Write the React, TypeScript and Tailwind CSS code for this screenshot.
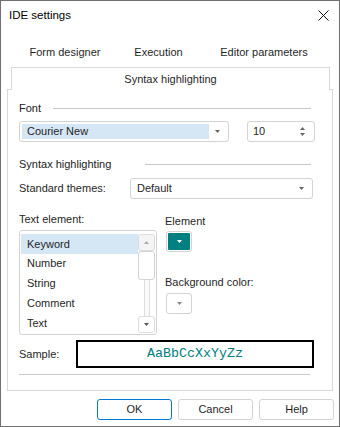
import { useState } from "react";

const font = { fontFamily: '"Liberation Sans", Arial, sans-serif' };

// tiny triangle used by combos / scroll buttons
const Tri = ({ up, color = "#666" }: { up?: boolean; color?: string }) => (
  <svg width="5" height="3" viewBox="0 0 5 3">
    <path d={up ? "M0 3h5L2.5 0z" : "M0 0h5L2.5 3z"} fill={color} />
  </svg>
);

const Section = ({ title, lineStart }: { title: string; lineStart: string }) => (
  <div className="flex items-center h-[14px]">
    <span className="text-[11px] text-[#222] whitespace-nowrap">{title}</span>
    <div className={`h-px bg-[#c8c8c8] ${lineStart} w-full mr-[4px]`} />
  </div>
);

const items = ["Keyword", "Number", "String", "Comment", "Text"];

const App = () => {
  const [sel, setSel] = useState(0);

  return (
    <div
      style={font}
      className="w-[340px] h-[427px] border border-[#707070] bg-white flex flex-col text-[#1f1f1f] select-none"
    >
      {/* title bar */}
      <div className="h-[29px] flex items-center justify-between pl-[8px] pr-[10px]">
        <span className="text-[11.5px] text-black">IDE settings</span>
        <svg width="11" height="11" viewBox="0 0 11 11" className="mb-[1px]">
          <path d="M0.5 0.5l10 10M10.5 0.5l-10 10" stroke="#111" strokeWidth="1" />
        </svg>
      </div>

      {/* upper tab row */}
      <div className="flex h-[22px] mt-[11px] ml-[10px] text-[11px] items-center">
        <div className="w-[108px] text-center">Form designer</div>
        <div className="w-[79px] text-center">Execution</div>
        <div className="w-[132px] text-center">Editor parameters</div>
      </div>

      {/* selected tab */}
      <div className="relative z-10 -mb-px mt-[4px] ml-[10px] w-[319px] h-[23px] border-t border-x border-[#d9d9d9] bg-white flex items-center justify-center text-[11px]">
        Syntax highlighting
      </div>

      {/* tab page */}
      <div className="ml-[6px] w-[326px] border border-[#d9d9d9] pl-[11px] pr-[17px] pb-[15px] flex flex-col">
        <div className="mt-[11px]">
          <Section title="Font" lineStart="ml-[12px]" />
        </div>

        <div className="flex items-center mt-[6px] gap-[18px]">
          <div className="w-[210px] h-[21px] border border-[#d3d3d3] rounded-[3px] flex items-center pl-[2px] pr-[8px]">
            <div className="flex-1 h-[15px] bg-[#d5e6f5] flex items-center pl-[5px] text-[11px]">
              Courier New
            </div>
            <div className="ml-[6px]">
              <Tri />
            </div>
          </div>
          <div className="w-[68px] h-[21px] border border-[#d3d3d3] rounded-[3px] flex items-center pl-[5px] pr-[9px] justify-between text-[11px]">
            <span>10</span>
            <div className="flex flex-col gap-[3px]">
              <Tri up />
              <Tri />
            </div>
          </div>
        </div>

        <div className="mt-[15px]">
          <Section title="Syntax highlighting" lineStart="ml-[34px]" />
        </div>

        <div className="flex items-center mt-[7px]">
          <span className="w-[111px] text-[11px]">Standard themes:</span>
          <div className="w-[183px] h-[21px] border border-[#d3d3d3] rounded-[3px] flex items-center justify-between pl-[6px] pr-[8px] text-[11px]">
            <span>Default</span>
            <Tri />
          </div>
        </div>

        <div className="flex mt-[13px]">
          <div className="w-[138px] flex flex-col">
            <div className="h-[14px] flex items-center text-[11px]">Text element:</div>
            <div className="mt-[4px] h-[105px] border border-[#d3d3d3] rounded-[3px] flex pl-[1px] pt-[3px] pb-[1px] pr-[1px]">
              <div className="flex-1 flex flex-col">
                {items.map((t, i) => (
                  <div
                    key={t}
                    onClick={() => setSel(i)}
                    className={`h-[20px] flex items-center pl-[6px] text-[11px] ${
                      sel === i ? "bg-[#d5e6f5]" : ""
                    }`}
                  >
                    {t}
                  </div>
                ))}
              </div>
              <div className="w-[17px] flex flex-col">
                <div className="h-[17px] border border-[#dcdcdc] rounded-[3px] bg-[#f4f4f4] flex items-center justify-center">
                  <Tri up color="#a8a8a8" />
                </div>
                <div className="h-[29px] border border-[#d3d3d3] rounded-[3px] bg-white" />
                <div className="flex-1 flex justify-center">
                  <div className="w-[6px] h-full border-x border-[#dcdcdc] bg-[#fafafa]" />
                </div>
                <div className="h-[17px] border border-[#dcdcdc] rounded-[3px] bg-white flex items-center justify-center">
                  <Tri color="#555" />
                </div>
              </div>
            </div>
          </div>

          <div className="ml-[8px] flex flex-col">
            <div className="h-[14px] mt-[2px] flex items-center text-[11px]">Element</div>
            <div className="mt-[3px] ml-[1px] w-[26px] h-[21px] border border-[#d3d3d3] rounded-[3px] p-[1px]">
              <div className="w-full h-full bg-[#008080] rounded-[1px] flex items-center justify-center">
                <Tri color="#fff" />
              </div>
            </div>
            <div className="h-[14px] mt-[23px] flex items-center text-[11px]">Background color:</div>
            <div className="mt-[4px] ml-[1px] w-[26px] h-[21px] border border-[#d3d3d3] rounded-[3px] bg-white flex items-center justify-center">
              <Tri color="#888" />
            </div>
          </div>
        </div>

        <div className="flex items-center mt-[5px]">
          <span className="w-[57px] text-[11px]">Sample:</span>
          <div
            className="w-[238px] h-[28px] border-2 border-black flex items-center justify-center text-[13.33px] text-[#008080]"
            style={{ fontFamily: '"Liberation Mono", "Courier New", monospace' }}
          >
            AaBbCcXxYyZz
          </div>
        </div>

        <div className="mt-[6px] h-px w-[291px] bg-[#c8c8c8]" />
      </div>

      {/* buttons */}
      <div className="flex justify-end gap-[6px] mt-[8px] mr-[5px] text-[11px]">
        <button className="w-[75px] h-[21px] border border-[#0078d7] rounded-[3px] bg-white">OK</button>
        <button className="w-[75px] h-[21px] border border-[#d3d3d3] rounded-[3px] bg-white">Cancel</button>
        <button className="w-[75px] h-[21px] border border-[#d3d3d3] rounded-[3px] bg-white">Help</button>
      </div>
    </div>
  );
};

export default App;
